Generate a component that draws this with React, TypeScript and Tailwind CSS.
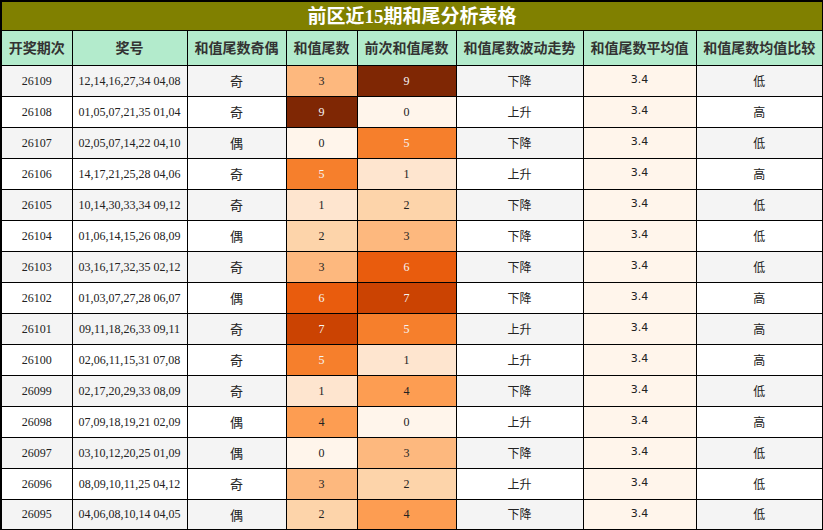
const rows: [string, string, string, number, number, string, string][] = [
  ["26109", "12,14,16,27,34 04,08", "奇", 3, 9, "下降", "低"],
  ["26108", "01,05,07,21,35 01,04", "奇", 9, 0, "上升", "高"],
  ["26107", "02,05,07,14,22 04,10", "偶", 0, 5, "下降", "低"],
  ["26106", "14,17,21,25,28 04,06", "奇", 5, 1, "上升", "高"],
  ["26105", "10,14,30,33,34 09,12", "奇", 1, 2, "下降", "低"],
  ["26104", "01,06,14,15,26 08,09", "偶", 2, 3, "下降", "低"],
  ["26103", "03,16,17,32,35 02,12", "奇", 3, 6, "下降", "低"],
  ["26102", "01,03,07,27,28 06,07", "偶", 6, 7, "下降", "高"],
  ["26101", "09,11,18,26,33 09,11", "奇", 7, 5, "上升", "高"],
  ["26100", "02,06,11,15,31 07,08", "奇", 5, 1, "上升", "高"],
  ["26099", "02,17,20,29,33 08,09", "奇", 1, 4, "下降", "低"],
  ["26098", "07,09,18,19,21 02,09", "偶", 4, 0, "上升", "高"],
  ["26097", "03,10,12,20,25 01,09", "偶", 0, 3, "下降", "低"],
  ["26096", "08,09,10,11,25 04,12", "奇", 3, 2, "上升", "低"],
  ["26095", "04,06,08,10,14 04,05", "偶", 2, 4, "下降", "低"],
];

// Oranges gradient, one class per tail value 0..9
const shade: Record<number, string> = {
  0: "bg-[#fff5eb] text-[#222]",
  1: "bg-[#fee5cf] text-[#222]",
  2: "bg-[#fdd4aa] text-[#222]",
  3: "bg-[#fdb87e] text-[#222]",
  4: "bg-[#fd9d52] text-[#222]",
  5: "bg-[#f67f2c] text-[#f5f5f5]",
  6: "bg-[#e95c0d] text-[#f5f5f5]",
  7: "bg-[#cb4302] text-[#f5f5f5]",
  8: "bg-[#a63603] text-[#f5f5f5]",
  9: "bg-[#7f2704] text-[#f5f5f5]",
};

const headers = ["开奖期次", "奖号", "和值尾数奇偶", "和值尾数", "前次和值尾数", "和值尾数波动走势", "和值尾数平均值", "和值尾数均值比较"];
const widths = ["w-[71px]", "w-[115px]", "w-[99px]", "w-[71px]", "w-[99px]", "w-[127px]", "w-[113px]", "w-[127px]"];

const serif = "font-['Liberation_Serif','Noto_Sans_CJK_SC',serif]";
const cjk = "font-['Noto_Sans_CJK_SC',sans-serif]";
const sans = "font-['DejaVu_Sans','Noto_Sans_CJK_SC',sans-serif]";

export default function App() {
  return (
    <div className="w-[823px] h-[530px] bg-white text-[#222]">
      <table className="w-[823px] table-fixed border-collapse border-2 border-black">
        <colgroup>
          {widths.map((w, i) => (
            <col key={i} className={w} />
          ))}
        </colgroup>
        <thead>
          <tr>
            <th colSpan={8} className={`h-[29px] bg-[#808000] border border-black text-white text-[19px] font-bold leading-none ${cjk}`}>
              前区近<span className={serif}>15</span>期和尾分析表格
            </th>
          </tr>
          <tr>
            {headers.map((h) => (
              <th key={h} className={`h-[35px] bg-[#b3ebcc] border border-black text-[14px] font-bold text-[#333] whitespace-nowrap ${cjk}`}>
                {h}
              </th>
            ))}
          </tr>
        </thead>
        <tbody>
          {rows.map((r, i) => {
            const bg = i % 2 === 0 ? "bg-[#f4f4f4]" : "bg-white";
            const cell = `h-[31px] border border-black text-center text-[12px] ${bg}`;
            return (
              <tr key={r[0]}>
                <td className={`${cell} ${serif}`}>{r[0]}</td>
                <td className={`${cell} ${serif} whitespace-nowrap`}>{r[1]}</td>
                <td className={`${cell} ${cjk} text-[13px]`}>{r[2]}</td>
                <td className={`h-[31px] border border-black text-center text-[12px] ${serif} ${shade[r[3]]}`}>{r[3]}</td>
                <td className={`h-[31px] border border-black text-center text-[12px] ${serif} ${shade[r[4]]}`}>{r[4]}</td>
                <td className={`${cell} ${cjk}`}>{r[5]}</td>
                <td className={`h-[31px] border border-black text-center text-[11px] bg-[#fff5eb] ${sans}`}>3.4</td>
                <td className={`${cell} ${cjk}`}>{r[6]}</td>
              </tr>
            );
          })}
        </tbody>
      </table>
    </div>
  );
}
